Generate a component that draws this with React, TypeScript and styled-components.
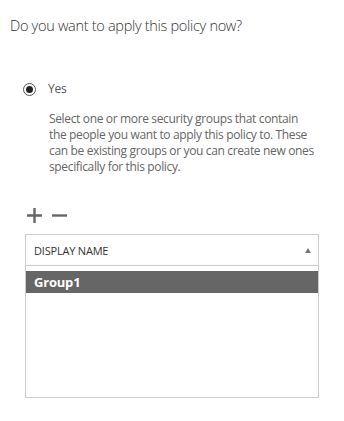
import React from "react";
import styled, { createGlobalStyle } from "styled-components";

const Global = createGlobalStyle`
  html, body { margin: 0; padding: 0; background: #ffffff; }
  body { font-family: "Open Sans", "Noto Sans", sans-serif; }
`;

const Page = styled.div`
  width: 344px;
  height: 421px;
  padding: 16px 10px 0 10px;
  box-sizing: border-box;
  display: flex;
  flex-direction: column;
`;

const Title = styled.h1`
  margin: 0;
  font-size: 14.5px;
  line-height: 20px;
  font-weight: 300;
  letter-spacing: -0.3px;
  color: #333333;
`;

const RadioRow = styled.label`
  margin: 45px 0 0 13px;
  display: flex;
  align-items: center;
  gap: 12px;
  font-size: 12px;
  line-height: 16px;
  letter-spacing: -0.2px;
  color: #555555;
`;

const RadioCircle = styled.span`
  width: 11px;
  height: 11px;
  border: 1px solid #555555;
  border-radius: 50%;
  display: flex;
  align-items: center;
  justify-content: center;
  &::after {
    content: "";
    width: 7px;
    height: 7px;
    border-radius: 50%;
    background: #222222;
  }
`;

const Description = styled.p`
  margin: 14px 0 0 39px;
  width: 268px;
  font-size: 12px;
  line-height: 16px;
  letter-spacing: -0.35px;
  color: #666666;
`;

const Toolbar = styled.div`
  margin: 33px 0 0 17px;
  display: flex;
  align-items: center;
  gap: 10px;
  height: 14px;
`;

const IconButton = styled.button`
  border: 0;
  background: none;
  padding: 0;
  width: 15px;
  height: 15px;
  display: flex;
  color: #666666;
  cursor: pointer;
`;

const Table = styled.div`
  margin: 12px 0 0 15px;
  width: 294px;
  height: 164px;
  box-sizing: border-box;
  border: 1px solid #cccccc;
  display: flex;
  flex-direction: column;
`;

const Header = styled.div`
  height: 31px;
  box-sizing: border-box;
  border-bottom: 1px solid #cccccc;
  display: flex;
  align-items: center;
  justify-content: space-between;
  padding: 0 7px 0 8px;
  font-size: 11px;
  letter-spacing: -0.2px;
  color: #333333;
`;

const SortArrow = styled.span`
  width: 0;
  height: 0;
  border-left: 3.5px solid transparent;
  border-right: 3.5px solid transparent;
  border-bottom: 5px solid #777777;
`;

const Row = styled.div<{ $selected?: boolean }>`
  margin-top: 5px;
  height: 22px;
  display: flex;
  align-items: center;
  padding-left: 8px;
  font-size: 13px;
  font-weight: 700;
  letter-spacing: -0.2px;
  color: ${(p) => (p.$selected ? "#ffffff" : "#333333")};
  background: ${(p) => (p.$selected ? "#666666" : "transparent")};
`;

export default function App() {
  return (
    <>
      <Global />
      <Page>
        <Title>Do you want to apply this policy now?</Title>
        <RadioRow>
          <RadioCircle />
          Yes
        </RadioRow>
        <Description>
          Select one or more security groups that contain the people you want to
          apply this policy to. These can be existing groups or you can create
          new ones specifically for this policy.
        </Description>
        <Toolbar>
          <IconButton aria-label="Add">
            <svg width="15" height="15" viewBox="0 0 15 15">
              <path d="M0 6.3h15v2.4H0z M6.3 0h2.4v15H6.3z" fill="currentColor" />
            </svg>
          </IconButton>
          <IconButton aria-label="Remove">
            <svg width="15" height="15" viewBox="0 0 15 15">
              <path d="M0 6.3h15v2.4H0z" fill="currentColor" />
            </svg>
          </IconButton>
        </Toolbar>
        <Table>
          <Header>
            <span>DISPLAY NAME</span>
            <SortArrow />
          </Header>
          <Row $selected>Group1</Row>
        </Table>
      </Page>
    </>
  );
}
